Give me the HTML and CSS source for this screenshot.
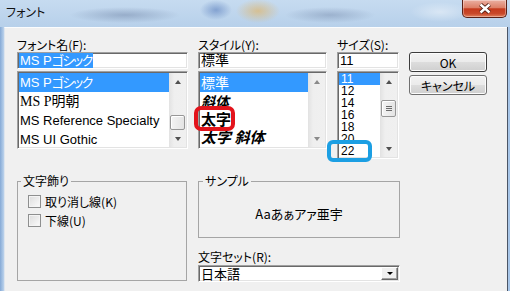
FILE: index.html
```html
<!doctype html>
<html lang="ja">
<head>
  <meta charset="UTF-8">
  <title>フォント</title>
  <link rel="stylesheet" href="styles.css">
</head>
<body>
  <div class="win">
    <div class="title">
      <span class="caption">フォント</span>
      <span class="close">
        <svg width="14" height="11" viewBox="0 0 14 11"><path d="M2.5 1.5L11.5 9.5M11.5 1.5L2.5 9.5" stroke="#4a1c12" stroke-width="4.2"/><path d="M2.5 1.5L11.5 9.5M11.5 1.5L2.5 9.5" stroke="#fff" stroke-width="2.4"/></svg>
      </span>
    </div>
    <div class="client">
      <div class="top">
        <div class="col c-name">
          <div class="lbl">フォント名(F):</div>
          <div class="edit"><span class="hl">MS P<span class="kana">ゴシック</span></span></div>
          <div class="list">
            <ul class="items">
              <li class="on">MS P<span class="kana">ゴシック</span></li>
              <li class="mincho">MS P明朝</li>
              <li>MS Reference Specialty</li>
              <li>MS UI Gothic</li>
            </ul>
            <div class="sb">
              <span class="arr up"></span>
              <span class="track end"><span class="thumb"></span></span>
              <span class="arr dn"></span>
            </div>
          </div>
        </div>
        <div class="col c-style">
          <div class="lbl">スタイル(Y):</div>
          <div class="edit big">標準</div>
          <div class="list">
            <ul class="items">
              <li class="on">標準</li>
              <li class="it">斜体</li>
              <li class="bd">太字</li>
              <li class="bd it">太字 斜体</li>
            </ul>
            <div class="sb">
              <span class="arr up off"></span>
              <span class="track"></span>
              <span class="arr dn off"></span>
            </div>
          </div>
        </div>
        <div class="col c-size">
          <div class="lbl">サイズ(S):</div>
          <div class="edit num">11</div>
          <div class="list">
            <ul class="items">
              <li class="on">11</li>
              <li>12</li>
              <li>14</li>
              <li>16</li>
              <li>18</li>
              <li>20</li>
              <li>22</li>
            </ul>
            <div class="sb">
              <span class="arr up"></span>
              <span class="track"><span class="thumb grip"></span></span>
              <span class="arr dn"></span>
            </div>
          </div>
        </div>
        <div class="btns">
          <button class="btn def">OK</button>
          <button class="btn">キャンセル</button>
        </div>
      </div>

      <div class="bottom">
        <fieldset class="group g-deco">
          <legend>文字飾り</legend>
          <div class="checks">
            <label class="chk"><span class="box"></span>取り消し線(K)</label>
            <label class="chk"><span class="box"></span>下線(U)</label>
          </div>
        </fieldset>
        <div class="rcol">
          <fieldset class="group g-sample">
            <legend>サンプル</legend>
            <div class="sample">Aaあぁアァ亜宇</div>
          </fieldset>
          <div class="lbl set">文字セット(R):</div>
          <div class="combo">
            <span class="val">日本語</span>
            <span class="drop"></span>
          </div>
        </div>
      </div>
    </div>

    <span class="mark red"></span>
    <span class="mark blue"></span>
  </div>
</body>
</html>
```

FILE: styles.css
```css
*{margin:0;
  padding:0;
  box-sizing:border-box;
  list-style:none;}
body{width:510px;
     height:291px;
     overflow:hidden;
     font-family:"Noto Sans CJK JP",sans-serif;
     font-size:12px;
     color:#000;
     font-feature-settings:"palt";}

/* window frame */
.win{position:relative;
     width:510px;
     height:291px;
     display:flex;
     flex-direction:column;
     background:linear-gradient(90deg,#86aad6,#bcd3ec 4px,#bcd3ec 506px,#9fc0e6);}
.title{height:27px;
       display:flex;
       justify-content:space-between;
       align-items:flex-start;
       padding:0 3px 0 6px;
       background:
         radial-gradient(55px 8px at 125px 15px,rgba(105,125,160,.45),transparent),
         radial-gradient(16px 10px at 216px 10px,rgba(70,110,180,.5),transparent),
         radial-gradient(22px 12px at 258px 11px,rgba(225,180,100,.65),transparent),
         radial-gradient(45px 8px at 330px 15px,rgba(105,125,160,.4),transparent),
         radial-gradient(30px 10px at 440px 12px,rgba(255,255,255,.4),transparent),
         linear-gradient(#c6dbf0,#b7d0ea);}
.caption{line-height:24px;
         color:#111;}
.close{width:45px;
       height:18px;
       display:flex;
       align-items:center;
       justify-content:center;
       border:1px solid #5a2116;
       border-top:0;
       border-radius:0 0 5px 5px;
       background:linear-gradient(#ebb0a2,#dd8068 45%,#c53a1d 52%,#c8492a 80%,#e2805c);
       box-shadow:inset 0 0 0 1px rgba(255,255,255,.35);}

.client{flex:1;
        margin:0 3px 0 4px;
        padding:11px 0 0 12px;
        background:#f0f0f0;
        border-top:1px solid #fbfcfd;
        border-left:1px solid #dde5ee;
        box-shadow:1px 0 0 #4a5566;}

/* top row */
.top{display:flex;
     gap:10px;
     align-items:flex-start;}
.col{display:flex;
     flex-direction:column;}
.c-name{width:171px;}
.c-style{width:129px;}
.c-size{width:62px;}
.lbl{height:13px;
     line-height:12px;
     white-space:nowrap;}
.edit{height:17px;
      margin-bottom:2px;
      padding:0 2px;
      line-height:15px;
      font-size:13px;
      font-family:"Liberation Sans","Noto Sans CJK JP",sans-serif;
      background:#fff;
      border:1px solid;
      border-color:#a0a0a0 #fff #fff #a0a0a0;
      box-shadow:inset 1px 1px #696969,inset -1px -1px #e3e3e3;}
.edit .hl{background:#3399ff;
          color:#fff;
          padding:0 1px;
          margin-left:-1px;}
.kana{letter-spacing:-1.5px;}
.edit.big{font-size:14px;}
.list{height:78px;
      display:flex;
      background:#fff;
      border:1px solid;
      border-color:#a0a0a0 #fff #fff #a0a0a0;
      box-shadow:inset 1px 1px #696969,inset -1px -1px #e3e3e3;
      padding:1px;}
.c-size .list{height:88px;}
.items{flex:1;
       overflow:hidden;
       font-family:"Liberation Sans","Noto Sans CJK JP",sans-serif;}
.items li{height:19px;
          line-height:19px;
          font-size:13px;
          padding-left:1px;
          white-space:nowrap;}
.items .on{background:#3399ff;
           color:#fff;}
.items .mincho{font-family:"Liberation Serif","Noto Sans CJK JP",serif;
               font-size:14px;}
.c-style .items li{height:18px;
                   line-height:18px;
                   font-size:14px;
                   font-family:"Noto Sans CJK JP",sans-serif;}
.c-style .items .on{height:19px;
                    line-height:19px;}
.c-style .items .it{font-style:italic;
                    font-weight:bold;}
.c-style .items .bd{font-weight:bold;
                    font-size:15px;}
.c-size .items li{height:12px;
                  line-height:12px;
                  font-size:12px;
                  padding-left:2px;}

/* scrollbar */
.sb{width:17px;
    display:flex;
    flex-direction:column;
    background:linear-gradient(90deg,#e2e2e2,#efefef 30%,#f0f0f0);}
.arr{height:17px;
     display:flex;
     align-items:center;
     justify-content:center;}
.arr::before{content:"";
             border-left:3.5px solid transparent;
             border-right:3.5px solid transparent;}
.up::before{border-bottom:4px solid #505050;}
.dn::before{border-top:4px solid #505050;}
.off.up::before{border-bottom-color:#8a8a8a;}
.off.dn::before{border-top-color:#8a8a8a;}
.track{flex:1;
       display:flex;
       flex-direction:column;
       padding:0 1px;}
.track.end{justify-content:flex-end;}
.thumb{height:15px;
       border:1px solid #979797;
       border-radius:2px;
       background:linear-gradient(90deg,#f4f4f4,#e4e4e4);
       box-shadow:inset 1px 1px #fff;}
.thumb.grip{height:17px;
            margin-top:10px;
            background:
              linear-gradient(#6c6c6c,#6c6c6c) 4px 5px/6px 1px no-repeat,
              linear-gradient(#6c6c6c,#6c6c6c) 4px 7px/6px 1px no-repeat,
              linear-gradient(#6c6c6c,#6c6c6c) 4px 9px/6px 1px no-repeat,
              linear-gradient(90deg,#f4f4f4,#e4e4e4);}

/* buttons */
.btns{width:78px;
      padding-top:13px;
      display:flex;
      flex-direction:column;
      gap:3px;}
.btn{height:20px;
     font:12px "Noto Sans CJK JP",sans-serif;
     font-feature-settings:"palt";
     color:#000;
     border:1px solid #707070;
     border-radius:3px;
     background:linear-gradient(#f2f2f2,#ebebeb 50%,#dddddd 51%,#cfcfcf);
     box-shadow:inset 0 0 0 1px #fcfcfc;}
.btn.def{border-color:#3c3c3c;}

/* bottom row */
.bottom{display:flex;
        gap:11px;
        margin-top:16px;}
.group{border:1px solid #a5a5a5;
       padding:0;}
.group legend{margin-left:3px;
              padding:0 2px;
              line-height:12px;}
.g-deco{width:170px;
        height:106px;}
.checks{padding:8px 0 0 10px;
        display:flex;
        flex-direction:column;
        gap:6px;}
.chk{display:flex;
     align-items:center;
     gap:4px;
     height:13px;
     line-height:13px;}
.box{width:13px;
     height:13px;
     border:1px solid #8e8f8f;
     background:linear-gradient(135deg,#dcdcdc,#fbfbfb);
     box-shadow:inset 0 0 0 1px #f4f4f4;}
.rcol{width:202px;
      display:flex;
      flex-direction:column;}
.g-sample{height:63px;}
.g-sample legend{margin-left:4px;}
.sample{height:50px;
        padding-top:2px;
        display:flex;
        align-items:center;
        justify-content:center;
        font-size:13px;}
.lbl.set{margin-top:13px;
         height:14px;}
.combo{height:17px;
       display:flex;
       align-items:center;
       justify-content:space-between;
       padding:0 1px 0 2px;
       background:#fff;
       border:1px solid;
       border-color:#a0a0a0 #fff #fff #a0a0a0;
       box-shadow:inset 1px 1px #696969,inset -1px -1px #e3e3e3;
       font-size:13px;}
.drop{width:17px;
      height:13px;
      display:flex;
      align-items:center;
      justify-content:center;
      background:#f0f0f0;
      border:1px solid;
      border-color:#fff #696969 #696969 #fff;
      box-shadow:inset -1px -1px #a0a0a0;}
.drop::before{content:"";
              border-left:3px solid transparent;
              border-right:3px solid transparent;
              border-top:3px solid #000;}

/* annotation marks */
.mark{position:absolute;
      border-width:4px;
      border-style:solid;
      border-radius:7px;}
.mark.red{left:194px;
          top:106px;
          width:41px;
          height:25px;
          border-color:#e3141c;}
.mark.blue{left:327px;
           top:140px;
           width:45px;
           height:22px;
           border-color:#1c9fe3;
           border-radius:6px;}
```
